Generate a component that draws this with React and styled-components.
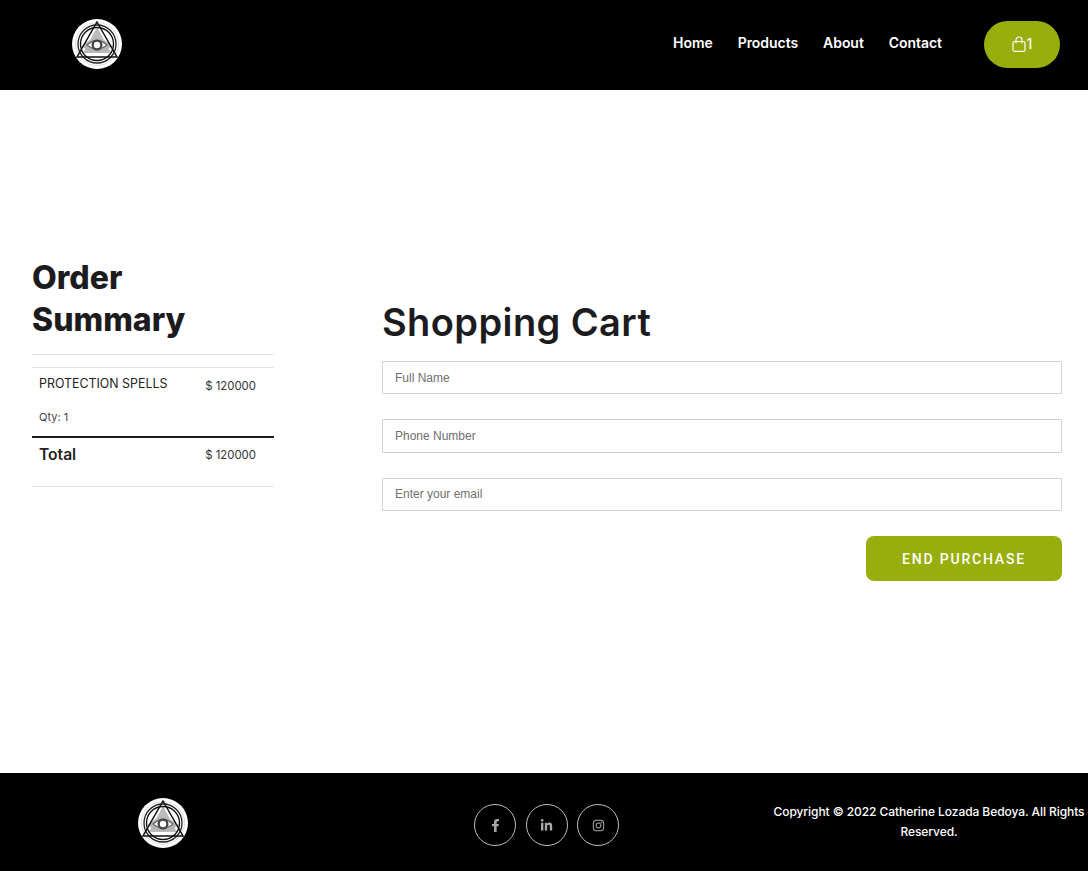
import React from 'react';
import styled, { createGlobalStyle } from 'styled-components';
import { FaFacebookF, FaLinkedinIn, FaInstagram } from 'react-icons/fa';

const GlobalStyle = createGlobalStyle`
  html, body {
    margin: 0;
    padding: 0;
    background: #fff;
  }
  body {
    font-family: Inter, "Liberation Sans", sans-serif;
    overflow-x: hidden;
  }
  * {
    box-sizing: border-box;
  }
`;

const Page = styled.div`
  width: 1088px;
  height: 871px;
  display: flex;
  flex-direction: column;
  overflow: hidden;
`;

const Header = styled.header`
  height: 90px;
  background: #000;
  display: flex;
  align-items: center;
  padding: 0 28px 2px 72px;
`;

const Nav = styled.nav`
  margin-left: auto;
  display: flex;
  align-items: center;
`;

const NavLink = styled.a`
  color: #fff;
  font-size: 14px;
  font-weight: 600;
  letter-spacing: -0.05px;
  margin-right: 25px;
  position: relative;
  top: -2px;
`;

const CartButton = styled.button`
  width: 76px;
  height: 47px;
  margin-left: 17px;
  border: 0;
  border-radius: 24px;
  background: #97ae0d;
  color: #fff;
  display: flex;
  align-items: center;
  justify-content: center;
  gap: 1px;
  padding: 0 0 2px;
  font: 500 14px Inter, sans-serif;
`;

const BagSvg = styled.svg`
  width: 14px;
  height: 16px;
  margin-top: 2px;
`;

const Main = styled.main`
  flex: 1;
  display: grid;
  grid-template-columns: 242px 680px;
  column-gap: 108px;
  padding: 0 0 0 32px;
`;

const Summary = styled.section`
  padding-top: 167px;
`;

const SummaryTitle = styled.h2`
  margin: 0 0 13px;
  max-width: 180px;
  color: #1c1c1f;
  font-size: 32px;
  line-height: 42px;
  font-weight: 800;
`;

const Rule = styled.div`
  height: ${props => props.thick ? 2 : 1}px;
  margin-bottom: ${props => props.gap || 0}px;
  background: ${props => props.thick ? '#1c1c1f' : '#e2e2e2'};
`;

const ItemRow = styled.div`
  display: flex;
  justify-content: space-between;
  align-items: ${props => props.center ? 'center' : 'flex-start'};
  height: ${props => props.h}px;
  padding: ${props => props.center ? '0 18px 15px 7px' : '7px 18px 0 7px'};
`;

const ItemName = styled.span`
  color: #222;
  font-size: 12.4px;
  line-height: 18px;
`;

const Price = styled.span`
  color: #333;
  font-size: 11.4px;
  line-height: 22px;
`;

const Qty = styled.div`
  height: 28px;
  padding: 1px 0 0 7px;
  color: #444;
  font-size: 11px;
  line-height: 16px;
`;

const TotalLabel = styled.span`
  color: #222;
  font-size: 15.6px;
  font-weight: 600;
`;

const Checkout = styled.section`
  padding-top: 210px;
  display: flex;
  flex-direction: column;
`;

const CartTitle = styled.h1`
  margin: 0 0 17px;
  color: #1c1c1f;
  font-size: 38px;
  line-height: 44px;
  font-weight: 600;
  letter-spacing: 0.4px;
`;

const Field = styled.input`
  height: 33.4px;
  margin-bottom: 25px;
  padding: 0 12px;
  border: 1px solid #d2d2d2;
  border-radius: 1px;
  outline: none;
  font-family: "Liberation Sans", Arial, sans-serif;
  font-size: 12px;
  &::placeholder {
    color: #6f6f6f;
    opacity: 1;
  }
`;

const SubmitButton = styled.button`
  align-self: flex-end;
  width: 196px;
  height: 45px;
  border: 0;
  border-radius: 8px;
  background: #97ae0d;
  color: #fff;
  font-family: Roboto, sans-serif;
  font-size: 14px;
  font-weight: 500;
  letter-spacing: 1.8px;
`;

const Footer = styled.footer`
  height: 98px;
  background: #000;
  display: flex;
  align-items: center;
`;

const FooterLogo = styled.div`
  width: 326px;
  padding: 2px 0 0 138px;
`;

const Socials = styled.div`
  width: 446px;
  display: flex;
  gap: 9.5px;
  padding: 6px 0 0 148px;
`;

const SocialLink = styled.a`
  width: 42px;
  height: 42px;
  border: 1px solid #bdbdbd;
  border-radius: 50%;
  color: #a9a9a9;
  display: flex;
  align-items: center;
  justify-content: center;
  font-size: 13px;
`;

const Copyright = styled.p`
  width: 314px;
  margin: 0;
  flex-shrink: 0;
  color: #fff;
  font-size: 12px;
  font-weight: 500;
  line-height: 20px;
  letter-spacing: -0.07px;
  text-align: center;
`;

const LogoSvg = styled.svg`
  display: block;
  width: 50px;
  height: 50px;
`;

const Logo = () => (
  <LogoSvg viewBox="0 0 50 50">
    <circle cx="25" cy="25" r="25" fill="#fff" />
    <circle cx="25" cy="25" r="21.5" fill="none" stroke="#ddd" strokeWidth="1" />
    <path d="M25 8 L39 34 L11 34 Z" fill="#bbb" />
    <path d="M10 27 Q25 12 40 27 Q25 40 10 27Z" fill="#b4b4b4" />
    <path d="M15 26 Q25 17 35 26 Q25 34 15 26Z" fill="#fff" stroke="#666" strokeWidth="1.2" />
    <circle cx="25" cy="26" r="5.5" fill="#444" />
    <circle cx="25" cy="26" r="3.2" fill="#fff" />
    <circle cx="25" cy="25" r="19" fill="none" stroke="#222" strokeWidth="1.3" />
    <circle cx="25" cy="25" r="16.5" fill="none" stroke="#111" strokeWidth="1.4" />
    <path d="M25 3 L45 38 L5 38 Z" fill="none" stroke="#111" strokeWidth="1.5" />
  </LogoSvg>
);

const BagIcon = () => (
  <BagSvg viewBox="0 0 14 16" fill="none" stroke="currentColor" strokeWidth="1.2">
    <rect x="1" y="5.5" width="12" height="9.8" rx="1.5" />
    <path d="M4 7.5 V4 a3 3 0 0 1 6 0 V7.5" />
  </BagSvg>
);

const App = () => {
  const links = ['Home', 'Products', 'About', 'Contact'];

  return (
    <Page>
      <GlobalStyle />
      <Header>
        <Logo />
        <Nav>
          {links.map(link => <NavLink key={link}>{link}</NavLink>)}
          <CartButton><BagIcon />1</CartButton>
        </Nav>
      </Header>
      <Main>
        <Summary>
          <SummaryTitle>Order Summary</SummaryTitle>
          <Rule gap={12} />
          <Rule />
          <ItemRow h={40}>
            <ItemName>PROTECTION SPELLS</ItemName>
            <Price>$ 120000</Price>
          </ItemRow>
          <Qty>Qty: 1</Qty>
          <Rule thick />
          <ItemRow center h={48}>
            <TotalLabel>Total</TotalLabel>
            <Price>$ 120000</Price>
          </ItemRow>
          <Rule />
        </Summary>
        <Checkout>
          <CartTitle>Shopping Cart</CartTitle>
          <Field placeholder="Full Name" />
          <Field placeholder="Phone Number" />
          <Field placeholder="Enter your email" />
          <SubmitButton>END PURCHASE</SubmitButton>
        </Checkout>
      </Main>
      <Footer>
        <FooterLogo><Logo /></FooterLogo>
        <Socials>
          <SocialLink><FaFacebookF /></SocialLink>
          <SocialLink><FaLinkedinIn /></SocialLink>
          <SocialLink><FaInstagram /></SocialLink>
        </Socials>
        <Copyright>Copyright © 2022 Catherine Lozada Bedoya. All Rights Reserved.</Copyright>
      </Footer>
    </Page>
  );
};

export default App;
